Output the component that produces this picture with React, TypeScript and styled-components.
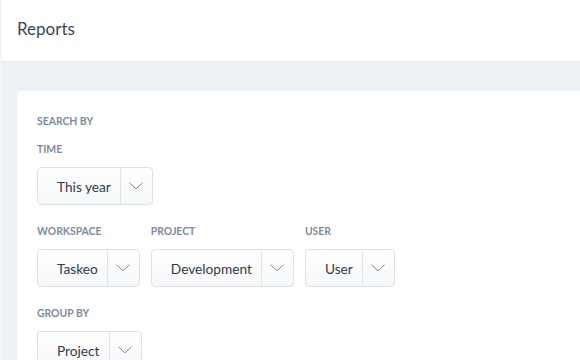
import React from "react";
import styled, { createGlobalStyle } from "styled-components";

const Global = createGlobalStyle`
  html, body { margin: 0; padding: 0; background: #eef2f5; }
  body { font-family: Lato, "Open Sans", sans-serif; -webkit-font-smoothing: antialiased; }
  * { box-sizing: border-box; }
`;

const Page = styled.div`
  width: 580px;
  height: 360px;
  overflow: hidden;
  background: #eef2f5;
  border-left: 2px solid #f3f5f7;
`;

const Header = styled.header`
  height: 62px;
  background: #ffffff;
  border-bottom: 1px solid #e2e5e9;
  display: flex;
  align-items: center;
  padding-left: 15px;
`;

const Title = styled.h1`
  margin: 0;
  font-size: 17px;
  font-weight: 400;
  color: #3a4657;
  line-height: 1;
  margin-top: -4px;
`;

const Body = styled.main`
  padding: 29px 0 0 15px;
`;

const Card = styled.section`
  background: #ffffff;
  border-radius: 4px 0 0 0;
  padding: 22px 20px 20px 20px;
  min-height: 300px;
`;

const Label = styled.div`
  font-size: 10.4px;
  font-weight: 700;
  color: #7d8ba0;
  text-transform: uppercase;
  line-height: 16px;
`;

const SectionTitle = styled(Label)`
  margin-bottom: 12px;
`;

const Row = styled.div`
  display: flex;
  gap: 11px;
  margin-bottom: 18px;
`;

const Field = styled.div`
  display: flex;
  flex-direction: column;
  gap: 10px;
`;

const Select = styled.button`
  display: inline-flex;
  align-items: stretch;
  height: 38px;
  padding: 0;
  border: 1px solid #dde2e7;
  border-radius: 4px;
  background: linear-gradient(#ffffff, #f5f7f9);
  font-family: inherit;
  cursor: pointer;
  align-self: flex-start;
`;

const Value = styled.span`
  display: flex;
  align-items: center;
  padding: 0 9px 0 19px;
  font-size: 13.7px;
  color: #2f3a4b;
  border-right: 1px solid #e0e4e9;
`;

const Caret = styled.span`
  width: 31px;
  display: flex;
  align-items: center;
  justify-content: center;
  color: #7e8898;
`;

const Chevron = () => (
  <svg width="14" height="8" viewBox="0 0 14 8" fill="none">
    <path d="M0.5 0.8 L7 6.8 L13.5 0.8" stroke="currentColor" strokeWidth="1" />
  </svg>
);

const Dropdown = ({ value }: { value: string }) => (
  <Select type="button">
    <Value>{value}</Value>
    <Caret>
      <Chevron />
    </Caret>
  </Select>
);

export default function App() {
  return (
    <Page>
      <Global />
      <Header>
        <Title>Reports</Title>
      </Header>
      <Body>
        <Card>
          <SectionTitle>Search by</SectionTitle>
          <Row>
            <Field>
              <Label>Time</Label>
              <Dropdown value="This year" />
            </Field>
          </Row>
          <Row>
            <Field>
              <Label>Workspace</Label>
              <Dropdown value="Taskeo" />
            </Field>
            <Field>
              <Label>Project</Label>
              <Dropdown value="Development" />
            </Field>
            <Field>
              <Label>User</Label>
              <Dropdown value="User" />
            </Field>
          </Row>
          <Row>
            <Field>
              <Label>Group by</Label>
              <Dropdown value="Project" />
            </Field>
          </Row>
        </Card>
      </Body>
    </Page>
  );
}
